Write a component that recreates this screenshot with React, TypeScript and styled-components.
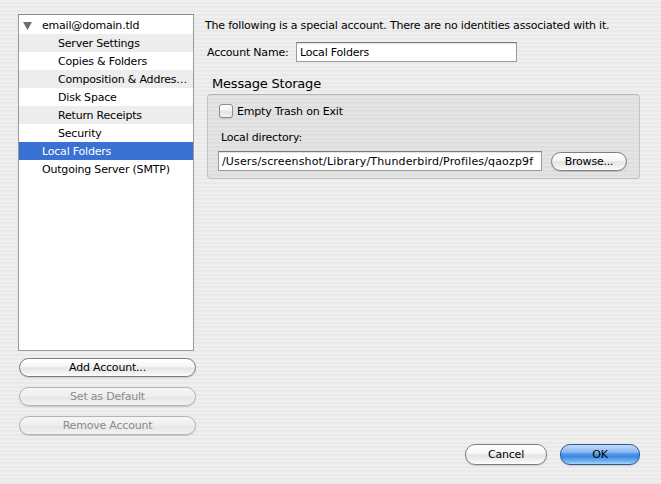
import React from "react";
import styled, { createGlobalStyle, css } from "styled-components";

const GlobalStyle = createGlobalStyle`
  html, body {
    margin: 0;
    padding: 0;
  }
  body {
    width: 661px;
    height: 484px;
    overflow: hidden;
    font-family: "DejaVu Sans", "Liberation Sans", sans-serif;
    font-size: 11px;
    letter-spacing: -0.2px;
    color: #000;
    background: repeating-linear-gradient(
      to bottom,
      #efefef 0px,
      #efefef 2px,
      #e9e9e9 2px,
      #e9e9e9 4px
    );
  }
`;

const Window = styled.div`
  width: 661px;
  height: 484px;
  display: flex;
  flex-direction: column;
  box-sizing: border-box;
`;

const Body = styled.div`
  display: flex;
  gap: 11px;
  padding: 14px 21px 0 18px;
`;

const LeftCol = styled.div`
  width: 176px;
  display: flex;
  flex-direction: column;
`;

const AccountTree = styled.div`
  height: 337px;
  box-sizing: border-box;
  background: #fff;
  border: 1px solid #9a9a9a;
  border-top-color: #8a8a8a;
  padding-top: 1px;
  display: flex;
  flex-direction: column;
`;

const TreeRow = styled.div<{ $depth: number; $alt?: boolean; $selected?: boolean }>`
  height: 18px;
  display: flex;
  align-items: center;
  padding-left: ${(p) => (p.$depth === 0 ? 23 : 39)}px;
  white-space: nowrap;
  background: ${(p) => (p.$selected ? "#3a72d3" : p.$alt ? "#ededed" : "#fff")};
  color: ${(p) => (p.$selected ? "#fff" : "#000")};
`;

const Twisty = styled.svg`
  width: 9px;
  height: 9px;
  margin-left: -19px;
  margin-right: 10px;
  flex-shrink: 0;
`;

const RowLabel = styled.span`
  white-space: nowrap;
`;

const ButtonStack = styled.div`
  display: flex;
  flex-direction: column;
  gap: 10px;
  margin-top: 7px;
  margin-right: -2px;
  padding-left: 1px;
`;

const aquaBase = css`
  box-sizing: border-box;
  height: 19px;
  border-radius: 10px;
  font-family: "DejaVu Sans", "Liberation Sans", sans-serif;
  font-size: 11px;
  letter-spacing: -0.2px;
  padding: 0;
  display: flex;
  align-items: center;
  justify-content: center;
  flex-shrink: 0;
  box-shadow: 0 1px 1px rgba(0, 0, 0, 0.15);
`;

const AquaButton = styled.button<{ $width?: number; $tall?: boolean; $disabled?: boolean }>`
  ${aquaBase};
  width: ${(p) => (p.$width ? `${p.$width}px` : "100%")};
  height: ${(p) => (p.$tall ? 21 : 19)}px;
  border: 1px solid ${(p) => (p.$disabled ? "#b4b4b4" : "#7d7d7d")};
  color: ${(p) => (p.$disabled ? "#8a8a8a" : "#000")};
  background: ${(p) =>
    p.$disabled
      ? "linear-gradient(to bottom, #f6f6f6 0%, #eeeeee 50%, #e6e6e6 51%, #f2f2f2 100%)"
      : "linear-gradient(to bottom, #ffffff 0%, #f5f5f5 45%, #e4e4e4 52%, #f3f3f3 85%, #ffffff 100%)"};
`;

const DefaultButton = styled.button<{ $width: number }>`
  ${aquaBase};
  width: ${(p) => p.$width}px;
  height: 21px;
  border: 1px solid #2f5490;
  color: #000;
  background: linear-gradient(
    to bottom,
    #c4dcf8 0%,
    #8dbcf1 35%,
    #4c93e6 50%,
    #3d89e2 60%,
    #6fb1f3 85%,
    #a8d5fb 100%
  );
`;

const RightCol = styled.div`
  flex: 1;
  display: flex;
  flex-direction: column;
  padding-top: 5px;
`;

const Intro = styled.div`
  line-height: 14px;
  white-space: nowrap;
`;

const FieldRow = styled.div`
  display: flex;
  align-items: center;
  margin-top: 9px;
  padding-left: 2px;
`;

const FieldLabel = styled.label`
  width: 89px;
  flex-shrink: 0;
`;

const TextField = styled.div<{ $width: number; $wide?: boolean }>`
  box-sizing: border-box;
  width: ${(p) => p.$width}px;
  height: 20px;
  flex-shrink: 0;
  background: #fff;
  border: 1px solid #9c9c9c;
  border-top-color: #7a7a7a;
  box-shadow: inset 0 1px 1px rgba(0, 0, 0, 0.12);
  display: flex;
  align-items: center;
  padding-left: 3px;
  white-space: nowrap;
  overflow: hidden;
  letter-spacing: ${(p) => (p.$wide ? "0.15px" : "-0.2px")};
`;

const GroupTitle = styled.div`
  font-size: 13px;
  line-height: 16px;
  margin-top: 14px;
  padding-left: 7px;
`;

const GroupBox = styled.div`
  margin: 2px 0 0 2px;
  box-sizing: border-box;
  height: 85px;
  border: 1px solid #c2c2c2;
  border-top-color: #b4b4b4;
  border-radius: 4px;
  background: rgba(0, 0, 0, 0.045);
  padding: 9px 0 0 11px;
  display: flex;
  flex-direction: column;
`;

const CheckRow = styled.label`
  display: flex;
  align-items: center;
  height: 14px;
`;

const CheckBox = styled.span`
  box-sizing: border-box;
  width: 14px;
  height: 14px;
  border: 1px solid #8c8c8c;
  border-radius: 3px;
  background: linear-gradient(to bottom, #ffffff 0%, #f2f2f2 50%, #e2e2e2 55%, #f6f6f6 100%);
  box-shadow: 0 1px 1px rgba(0, 0, 0, 0.12);
  margin-right: 4px;
`;

const SubLabel = styled.div`
  margin-top: 13px;
  padding-left: 2px;
  line-height: 14px;
`;

const DirRow = styled.div`
  display: flex;
  align-items: center;
  gap: 9px;
  margin-top: 6px;
  margin-left: -1px;
`;

const Footer = styled.div`
  margin-top: auto;
  display: flex;
  justify-content: flex-end;
  gap: 13px;
  padding: 0 21px 19px 0;
`;

const treeItems: { label: string; depth: number; open?: boolean }[] = [
  { label: "email@domain.tld", depth: 0, open: true },
  { label: "Server Settings", depth: 1 },
  { label: "Copies & Folders", depth: 1 },
  { label: "Composition & Addres…", depth: 1 },
  { label: "Disk Space", depth: 1 },
  { label: "Return Receipts", depth: 1 },
  { label: "Security", depth: 1 },
  { label: "Local Folders", depth: 0 },
  { label: "Outgoing Server (SMTP)", depth: 0 },
];

export default function App() {
  return (
    <>
      <GlobalStyle />
      <Window>
        <Body>
          <LeftCol>
            <AccountTree>
              {treeItems.map((item, i) => (
                <TreeRow
                  key={item.label}
                  $depth={item.depth}
                  $alt={i % 2 === 1}
                  $selected={item.label === "Local Folders"}
                >
                  {item.open && (
                    <Twisty viewBox="0 0 9 9">
                      <path d="M0 1 L9 1 L4.5 9 Z" fill="#6e6e6e" />
                    </Twisty>
                  )}
                  <RowLabel>{item.label}</RowLabel>
                </TreeRow>
              ))}
            </AccountTree>
            <ButtonStack>
              <AquaButton>Add Account...</AquaButton>
              <AquaButton $disabled>Set as Default</AquaButton>
              <AquaButton $disabled>Remove Account</AquaButton>
            </ButtonStack>
          </LeftCol>
          <RightCol>
            <Intro>
              The following is a special account. There are no identities associated with it.
            </Intro>
            <FieldRow>
              <FieldLabel>Account Name:</FieldLabel>
              <TextField $width={221}>Local Folders</TextField>
            </FieldRow>
            <GroupTitle>Message Storage</GroupTitle>
            <GroupBox>
              <CheckRow>
                <CheckBox />
                Empty Trash on Exit
              </CheckRow>
              <SubLabel>Local directory:</SubLabel>
              <DirRow>
                <TextField $width={324} $wide>
                  /Users/screenshot/Library/Thunderbird/Profiles/qaozp9f
                </TextField>
                <AquaButton $width={76}>Browse...</AquaButton>
              </DirRow>
            </GroupBox>
          </RightCol>
        </Body>
        <Footer>
          <AquaButton $width={82} $tall>
            Cancel
          </AquaButton>
          <DefaultButton $width={80}>OK</DefaultButton>
        </Footer>
      </Window>
    </>
  );
}
